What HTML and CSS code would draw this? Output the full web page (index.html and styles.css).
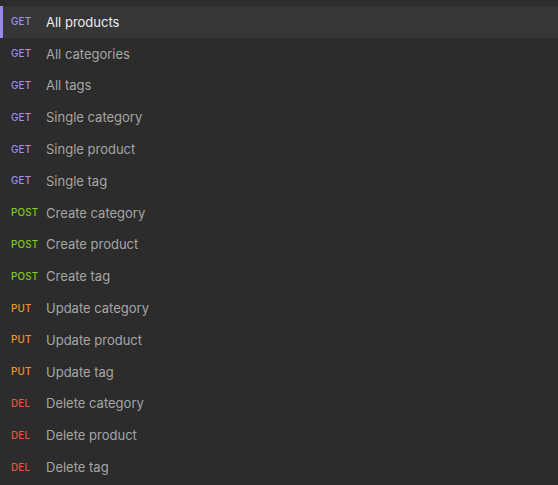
FILE: index.html
```html
<!DOCTYPE html>
<html>
<head>
<meta charset="utf-8">
<link rel="stylesheet" href="styles.css">
</head>
<body>
<ul class="list">
  <li class="row active"><span class="method get">GET</span><span class="name">All products</span></li>
  <li class="row"><span class="method get">GET</span><span class="name">All categories</span></li>
  <li class="row"><span class="method get">GET</span><span class="name">All tags</span></li>
  <li class="row"><span class="method get">GET</span><span class="name">Single category</span></li>
  <li class="row"><span class="method get">GET</span><span class="name">Single product</span></li>
  <li class="row"><span class="method get">GET</span><span class="name">Single tag</span></li>
  <li class="row"><span class="method post">POST</span><span class="name">Create category</span></li>
  <li class="row"><span class="method post">POST</span><span class="name">Create product</span></li>
  <li class="row"><span class="method post">POST</span><span class="name">Create tag</span></li>
  <li class="row"><span class="method put">PUT</span><span class="name">Update category</span></li>
  <li class="row"><span class="method put">PUT</span><span class="name">Update product</span></li>
  <li class="row"><span class="method put">PUT</span><span class="name">Update tag</span></li>
  <li class="row"><span class="method del">DEL</span><span class="name">Delete category</span></li>
  <li class="row"><span class="method del">DEL</span><span class="name">Delete product</span></li>
  <li class="row"><span class="method del">DEL</span><span class="name">Delete tag</span></li>
</ul>
</body>
</html>
```
FILE: styles.css
```css
html, body {
  margin: 0;
  padding: 0;
  background: #2c2c2c;
  height: 100%;
}
body {
  font-family: "Inter", "Liberation Sans", sans-serif;
  overflow: hidden;
}
.list {
  list-style: none;
  margin: 0;
  padding: 6px 0 0 0;
}
.row {
  display: flex;
  align-items: center;
  height: 31.8px;
  padding-left: 11px;
  box-sizing: border-box;
}
.row.active {
  background: #363636;
  box-shadow: inset 3px 0 0 #9a88f2;
}
.method {
  width: 35px;
  font-size: 9.8px;
  font-weight: 500;
  letter-spacing: 0.2px;
}
.get { color: #a391f2; }
.post { color: #7fcc1f; }
.put { color: #f29a1c; }
.del { color: #e5573a; }
.name {
  font-size: 13px;
  color: #a6a6a6;
}
.active .name {
  color: #ececec;
}
```
